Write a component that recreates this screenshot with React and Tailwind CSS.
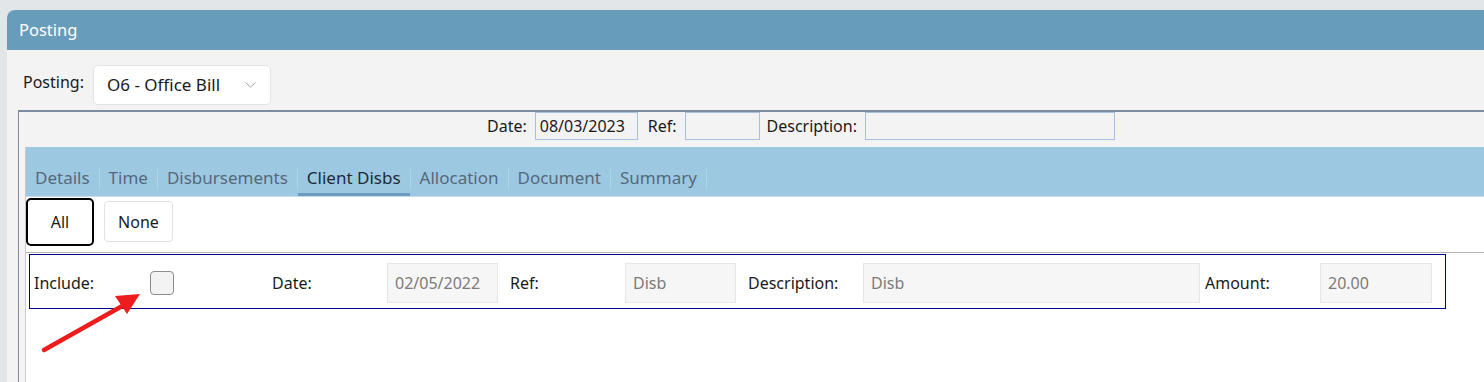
import React from "react";

const font = { fontFamily: '"Noto Sans", "Open Sans", sans-serif' };

function Tab({ label, active }) {
  return (
    <div className="flex items-center h-full">
      <div
        className={
          "h-full flex items-center px-[9px] pt-[15px] border-b-[3px] text-[17px] " +
          (active ? "text-[#1d2a36] border-[#6b9cbf]" : "text-[#55687a] border-transparent")
        }
      >
        {label}
      </div>
      <div className="w-px h-[20px] mt-[15px] bg-[#b3d3e7]" />
    </div>
  );
}

function Field({ label, value, width, labelW = "w-[115px]" }) {
  return (
    <div className="flex items-center">
      <div className={labelW + " text-[#1a1a1a]"}>{label}</div>
      <div
        className={
          width +
          " h-[40px] bg-[#f6f6f6] border border-[#e6e6e6] flex items-center px-[7px] text-[#7b7b7b]"
        }
      >
        {value}
      </div>
    </div>
  );
}

export default function App() {
  return (
    <div
      className="w-[1484px] h-[382px] overflow-hidden bg-[#e3e6e9] pt-[10px] pl-[7px] text-[16px]"
      style={font}
    >
      <div className="h-[372px] rounded-tl-[8px] overflow-hidden bg-[#f3f3f3] flex flex-col">
        <div className="h-[40px] shrink-0 bg-[#689cbb] text-white flex items-center px-[12px] text-[16.5px]">
          Posting
        </div>
        <div className="flex-1 pt-[15px] pl-[11px] flex flex-col">
          <div className="flex items-center h-[40px]">
            <div className="ml-[5px] w-[70px] text-[#1a1a1a] -mt-[6px]">Posting:</div>
            <div className="w-[178px] h-[40px] bg-white rounded-[5px] border border-[#e3e3e3] flex items-center pl-[13px] pr-[14px] justify-between text-[#1a1a1a] text-[17px]">
              <span>O6 - Office Bill</span>
              <svg width="11" height="6" viewBox="0 0 11 6" fill="none">
                <path d="M0.5 0.5 L5.5 5 L10.5 0.5" stroke="#9aa0a8" strokeWidth="1" />
              </svg>
            </div>
          </div>
          <div className="mt-[5px] flex-1 border-t-2 border-l border-[#7a8da2] pl-[6px] flex flex-col">
            <div className="h-[28px] flex items-center pl-[462px] text-[#1a1a1a]">
              <span className="mr-[8px]">Date:</span>
              <div className="w-[103px] h-[28px] border border-[#a8c0e0] flex items-center px-[4px]">08/03/2023</div>
              <span className="ml-[10px] mr-[8px]">Ref:</span>
              <div className="w-[75px] h-[28px] border border-[#a8c0e0]" />
              <span className="ml-[7px] mr-[8px]">Description:</span>
              <div className="w-[250px] h-[28px] border border-[#a8c0e0]" />
            </div>
            <div className="mt-[7px] flex-1 flex flex-col border-l border-[#c9c9c9] bg-white">
              <div className="h-[50px] shrink-0 bg-[#9dc8e2] border-b border-[#c7dcea] flex items-stretch">
                <Tab label="Details" />
                <Tab label="Time" />
                <Tab label="Disbursements" />
                <Tab label="Client Disbs" active />
                <Tab label="Allocation" />
                <Tab label="Document" />
                <Tab label="Summary" />
              </div>
              <div className="flex items-center h-[49px] gap-[10px]">
                <button className="w-[68px] h-[48px] border-2 border-black rounded-[5px] bg-white text-[#1a1a1a]">
                  All
                </button>
                <button className="w-[69px] h-[41px] border border-[#e2e2e2] rounded-[4px] bg-white text-[#1a1a1a]">
                  None
                </button>
              </div>
              <div className="mt-[6px] border-t border-[#b3b3b3]" />
              <div className="relative mt-[1px]">
                <div className="ml-[3px] w-[1417px] h-[55px] border border-[#00008b] flex items-center pl-[4px] pt-[2px]">
                  <div className="w-[116px] text-[#1a1a1a]">Include:</div>
                  <div className="w-[24px] h-[24px] rounded-[4px] border border-[#8c8c8c] bg-[#f3f3f3]" />
                  <div className="w-[98px]" />
                  <Field label="Date:" value="02/05/2022" width="w-[111px]" />
                  <div className="w-[12px]" />
                  <Field label="Ref:" value="Disb" width="w-[111px]" />
                  <div className="w-[12px]" />
                  <Field label="Description:" value="Disb" width="w-[337px]" />
                  <div className="w-[5px]" />
                  <Field label="Amount:" value="20.00" width="w-[112px]" />
                </div>
                <svg
                  className="absolute left-[-26px] top-0"
                  width="160"
                  height="110"
                  viewBox="0 0 160 110"
                >
                  <line x1="44" y1="96" x2="124" y2="51" stroke="#ee1c1c" strokeWidth="4.5" strokeLinecap="round" />
                  <polygon points="140,40 115,42 127,60" fill="#ee1c1c" />
                </svg>
              </div>
            </div>
          </div>
        </div>
      </div>
    </div>
  );
}
